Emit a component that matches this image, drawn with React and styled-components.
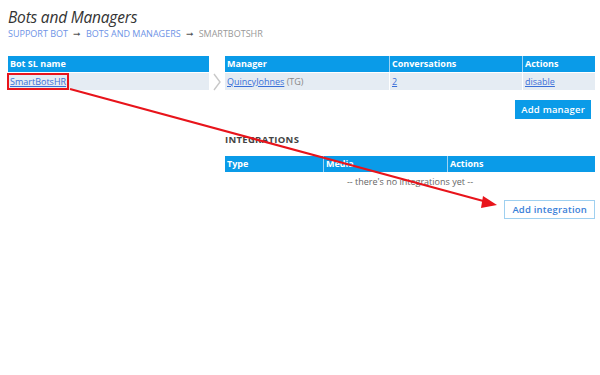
import React from 'react';
import styled, { createGlobalStyle } from 'styled-components';

const Global = createGlobalStyle`
  html, body { margin: 0; padding: 0; background: #fff; }
  body { font-family: "Open Sans", "Noto Sans", sans-serif; color: #333; }
`;

const Page = styled.div`
  position: relative;
  width: 600px;
  height: 375px;
  box-sizing: border-box;
  padding: 7px 5px 0 8px;
`;

const Title = styled.h1`
  margin: 0;
  font-size: 15.5px;
  font-weight: 400;
  font-style: italic;
  color: #333;
  line-height: 20px;
  letter-spacing: -0.2px;
`;

const Crumbs = styled.div`
  display: flex;
  align-items: center;
  gap: 5px;
  font-size: 9px;
  line-height: 12px;
  text-transform: uppercase;
  margin-top: 1px;
`;

const Crumb = styled.span`
  color: ${p => (p.$current ? '#999' : '#6e93e6')};
`;

const Sep = styled.span`
  color: #555;
  font-size: 9px;
`;

const Columns = styled.div`
  display: flex;
  margin-top: 16px;
`;

const Left = styled.div`
  width: 201px;
  flex: none;
`;

const Chevron = styled.div`
  width: 16px;
  flex: none;
  padding-top: 17px;
  display: flex;
  justify-content: center;
`;

const Right = styled.div`
  flex: 1;
  display: flex;
  flex-direction: column;
`;

const Table = styled.div`
  display: grid;
  grid-template-columns: ${p => p.$cols};
  row-gap: 1px;
`;

const Head = styled.div`
  background: #0a9be8;
  color: #fff;
  font-weight: 700;
  font-size: 9px;
  height: 16px;
  line-height: 16px;
  padding: 0 2px;
  border-left: ${p => (p.$first ? 'none' : '1px solid #9fd3f3')};
`;

const Cell = styled.div`
  background: #e5ecf3;
  font-size: 9px;
  height: 17px;
  line-height: 17px;
  padding: 0 2px;
  color: #888;
  border-left: ${p => (p.$first ? 'none' : '1px solid #fff')};
`;

const Empty = styled.div`
  grid-column: 1 / -1;
  text-align: center;
  font-size: 9px;
  color: #666;
  height: 17px;
  line-height: 17px;
`;

const Link = styled.a`
  color: #3a6fd8;
  text-decoration: underline;
  cursor: pointer;
  outline: ${p => (p.$marked ? '2px solid #e8141b' : 'none')};
  padding: ${p => (p.$marked ? '0 1px' : '0')};
  margin-left: ${p => (p.$marked ? '-1px' : '0')};
`;

const Actions = styled.div`
  display: flex;
  justify-content: flex-end;
  margin-top: ${p => p.$top}px;
`;

const Button = styled.button`
  font-family: inherit;
  font-size: 9.5px;
  font-weight: 600;
  letter-spacing: 0.2px;
  white-space: nowrap;
  height: 19px;
  padding: 0 ${p => p.$px || 8}px;
  margin-right: ${p => p.$mr || 0}px;
  border: 1px solid ${p => (p.$outline ? '#9fd0f0' : '#0a9be8')};
  background: ${p => (p.$outline ? '#fff' : '#0a9be8')};
  color: ${p => (p.$outline ? '#3a80d8' : '#fff')};
  cursor: pointer;
`;

const Section = styled.div`
  margin-top: 15px;
  margin-bottom: 10px;
  font-size: 9.5px;
  font-weight: 700;
  letter-spacing: 0.3px;
  color: #444;
  line-height: 12px;
`;

const Overlay = styled.svg`
  position: absolute;
  left: 0;
  top: 0;
  pointer-events: none;
`;

export default function App() {
  return (
    <Page>
      <Global />
      <Title>Bots and Managers</Title>
      <Crumbs>
        <Crumb>Support bot</Crumb>
        <Sep>➞</Sep>
        <Crumb>Bots and managers</Crumb>
        <Sep>➞</Sep>
        <Crumb $current>SmartBotsHR</Crumb>
      </Crumbs>

      <Columns>
        <Left>
          <Table $cols="1fr">
            <Head $first>Bot SL name</Head>
            <Cell $first><Link $marked>SmartBotsHR</Link></Cell>
          </Table>
        </Left>

        <Chevron>
          <svg width="10" height="18" viewBox="0 0 10 18">
            <polyline points="2,1 8,9 2,17" fill="none" stroke="#c8c8c8" strokeWidth="1.4" />
          </svg>
        </Chevron>

        <Right>
          <Table $cols="164px 133px 1fr">
            <Head $first>Manager</Head>
            <Head>Conversations</Head>
            <Head>Actions</Head>
            <Cell $first><Link>QuincyJohnes</Link> (TG)</Cell>
            <Cell><Link>2</Link></Cell>
            <Cell><Link>disable</Link></Cell>
          </Table>

          <Actions $top={10}>
            <Button $mr={4} $px={5}>Add manager</Button>
          </Actions>

          <Section>INTEGRATIONS</Section>

          <Table $cols="98px 124px 1fr">
            <Head $first>Type</Head>
            <Head>Media</Head>
            <Head>Actions</Head>
            <Empty>-- there's no integrations yet --</Empty>
          </Table>

          <Actions $top={10}>
            <Button $outline $px={7}>Add integration</Button>
          </Actions>
        </Right>
      </Columns>

      <Overlay width="600" height="375">
        <line x1="70" y1="89" x2="487" y2="202" stroke="#e8141b" strokeWidth="2" />
        <polygon points="497,205 483,196 481,208" fill="#e8141b" />
      </Overlay>
    </Page>
  );
}
